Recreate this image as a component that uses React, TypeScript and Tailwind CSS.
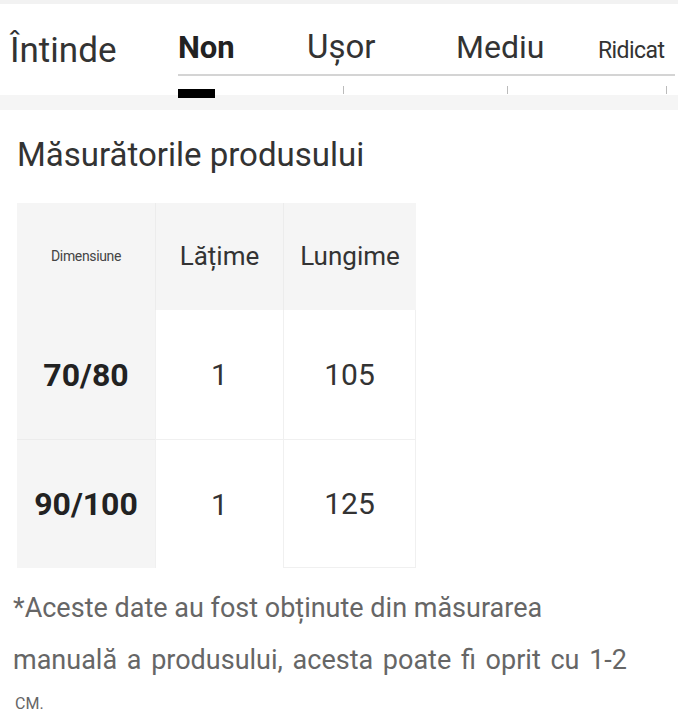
import React from "react";

const rows = [
  { size: "70/80", width: "1", length: "105" },
  { size: "90/100", width: "1", length: "125" },
];

export default function App() {
  return (
    <div className="w-[678px] h-[722px] bg-white overflow-hidden font-['Roboto',sans-serif] text-[#333]">
      {/* stretch selector */}
      <div className="border-t-4 border-[#f2f2f2]">
        <div className="flex items-start h-[91px]">
          <div className="pl-[10px] pt-[29px] w-[178px] text-[35px] leading-none text-[#333]">
            Întinde
          </div>
          <div className="flex-1 pt-[26px] pr-[3px]">
            <div className="flex items-baseline h-[36px] text-[#333]">
              <span className="w-[129px] text-[31px] font-bold leading-none text-[#222]">Non</span>
              <span className="w-[149px] text-[33px] leading-none">Ușor</span>
              <span className="w-[142px] text-[32px] leading-none">Mediu</span>
              <span className="text-[23px] leading-none tracking-tight">Ridicat</span>
            </div>
            <div className="mt-[8px] h-[2px] bg-[#d4d4d4]" />
            <div className="relative h-[20px]">
              <div className="absolute left-0 top-[13px] w-[37px] h-[9px] bg-black" />
              <div className="absolute left-[165px] top-[10px] w-[1px] h-[8px] bg-[#bbb]" />
              <div className="absolute left-[329px] top-[10px] w-[1px] h-[8px] bg-[#bbb]" />
              <div className="absolute left-[488px] top-[10px] w-[1px] h-[8px] bg-[#bbb]" />
            </div>
          </div>
        </div>
        <div className="h-[15px] bg-[#f5f5f5]" />
      </div>

      {/* measurements */}
      <div className="px-[17px]">
        <h2 className="mt-[28px] text-[33px] leading-none text-[#333]">Măsurătorile produsului</h2>
        <div className="mt-[32px] w-[399px] grid grid-cols-[138px_128px_133px]">
          <div className="h-[107px] bg-[#f5f5f5] flex items-center justify-center text-[14px] text-[#444] tracking-tight">
            Dimensiune
          </div>
          <div className="h-[107px] bg-[#f5f5f5] border-l border-[#ececec] flex items-center justify-center text-[26px]">
            Lățime
          </div>
          <div className="h-[107px] bg-[#f5f5f5] border-l border-[#ececec] flex items-center justify-center text-[26px]">
            Lungime
          </div>
          {rows.map((r, i) => (
            <React.Fragment key={r.size}>
              <div
                className={`h-[129px] bg-[#f5f5f5] flex items-center justify-center text-[32px] font-bold text-[#222] ${
                  i > 0 ? "border-t border-[#ececec]" : ""
                }`}
              >
                {r.size}
              </div>
              <div
                className={`h-[129px] border-l border-[#f0f0f0] flex items-center justify-center text-[30px] ${
                  i > 0 ? "border-t border-[#f0f0f0]" : ""
                }`}
              >
                {r.width}
              </div>
              <div
                className={`h-[129px] border-l border-r border-[#f0f0f0] flex items-center justify-center text-[30px] ${
                  i > 0 ? "border-t border-b" : ""
                }`}
              >
                {r.length}
              </div>
            </React.Fragment>
          ))}
        </div>
      </div>

      <div className="px-[13px] mt-[14px] text-[#666] text-[27px] leading-[52px]">
        <p>*Aceste date au fost obținute din măsurarea</p>
        <p className="[word-spacing:3px]">manuală a produsului, acesta poate fi oprit cu 1-2</p>
        <p className="mt-[10px] pl-[2px] text-[16px] leading-none">CM.</p>
      </div>
    </div>
  );
}
